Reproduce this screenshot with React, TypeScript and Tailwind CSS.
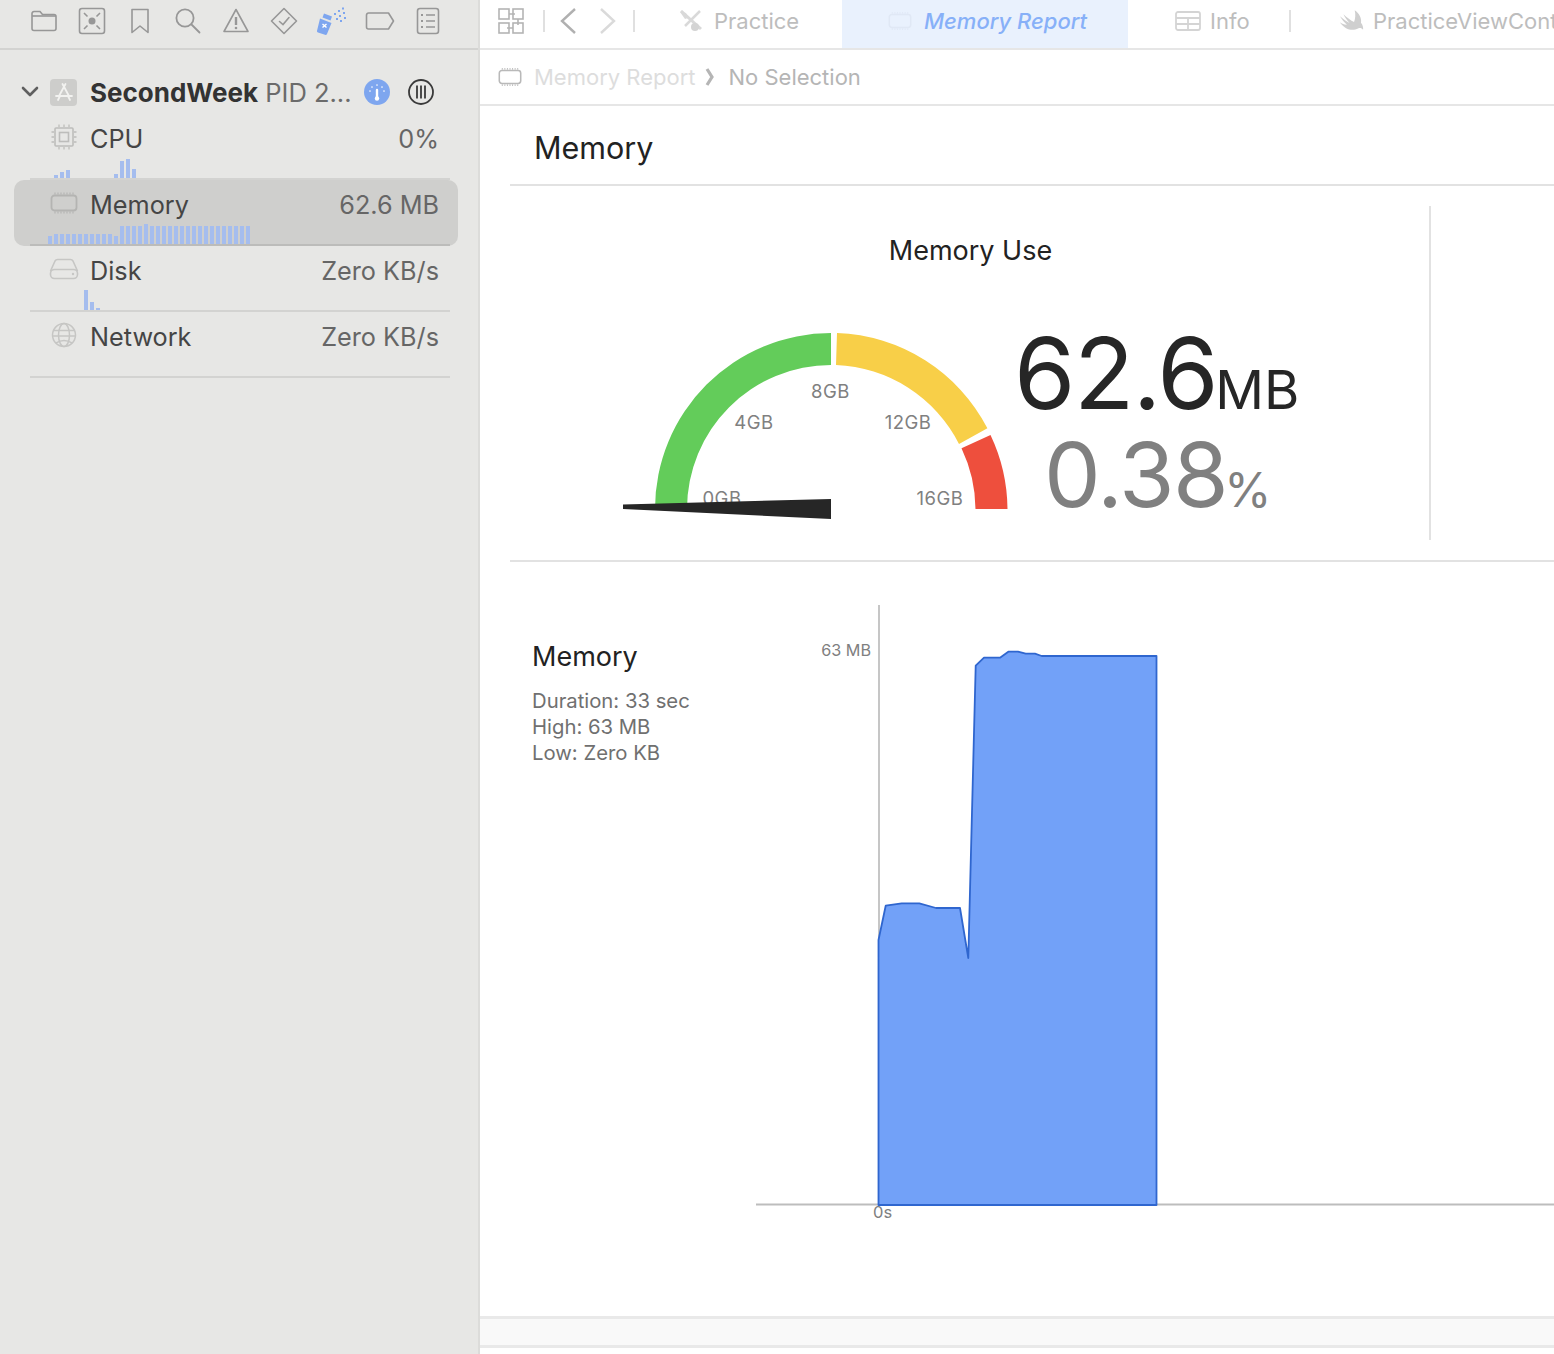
const GREY = '#979797';

function Folder() {
  return (
    <svg width="28" height="26" viewBox="0 0 28 26" fill="none" stroke={GREY} strokeWidth="1.6">
      <path d="M2 20.5V5.5a2 2 0 0 1 2-2h6l2.5 3H24a2 2 0 0 1 2 2v12a2 2 0 0 1-2 2H4a2 2 0 0 1-2-2z" />
      <path d="M2 8h24" />
    </svg>
  );
}

function Issues() {
  return (
    <svg width="28" height="28" viewBox="0 0 28 28" fill="none" stroke={GREY} strokeWidth="1.6">
      <rect x="1.5" y="1.5" width="25" height="25" rx="2.5" />
      <circle cx="14" cy="14" r="3.5" fill={GREY} stroke="none" />
      <path d="M6 6l3.5 3.5M22 6l-3.5 3.5M6 22l3.5-3.5M22 22l-3.5-3.5" />
    </svg>
  );
}

function Bookmark() {
  return (
    <svg width="20" height="28" viewBox="0 0 20 28" fill="none" stroke={GREY} strokeWidth="1.6">
      <path d="M2 2.5h16v23l-8-6.5-8 6.5z" strokeLinejoin="round" />
    </svg>
  );
}

function Search() {
  return (
    <svg width="28" height="28" viewBox="0 0 28 28" fill="none" stroke={GREY} strokeWidth="1.8">
      <circle cx="11" cy="11" r="8.6" />
      <path d="M17.5 17.5l8 8" strokeLinecap="round" />
    </svg>
  );
}

function Warning() {
  return (
    <svg width="28" height="28" viewBox="0 0 28 28" fill="none" stroke={GREY} strokeWidth="1.6">
      <path d="M14 2.5L26 24.5H2z" strokeLinejoin="round" />
      <path d="M14 10v8" strokeWidth="2.4" />
      <circle cx="14" cy="21" r="1.3" fill={GREY} stroke="none" />
    </svg>
  );
}

function TestDiamond() {
  return (
    <svg width="28" height="28" viewBox="0 0 28 28" fill="none" stroke={GREY} strokeWidth="1.6">
      <path d="M14 1.5L26.5 14 14 26.5 1.5 14z" strokeLinejoin="round" />
      <path d="M9.5 14.5l3.5 3 6-7" strokeLinecap="round" />
    </svg>
  );
}

function Spray() {
  return (
    <svg width="32" height="28" viewBox="0 0 32 28" fill="none">
      <path d="M4 11.5l11.5 4.5-4.5 11a1.6 1.6 0 0 1-2 .8L2 25.5a1.6 1.6 0 0 1-.9-2z" fill="#7ea6ef" />
      <path d="M8 6.5l8 3-1.5 4-8-3z" fill="#7ea6ef" />
      <path d="M6.5 18l4 3.5M10.500 18l-4 3.5" stroke="#fff" strokeWidth="1.4" transform="translate(0 -1)" />
      <g fill="#7ea6ef">
        <rect x="18" y="6" width="2" height="2" />
        <rect x="22" y="3" width="2" height="2" />
        <rect x="26" y="0.5" width="2" height="2" />
        <rect x="23" y="8" width="2" height="2" />
        <rect x="27" y="5" width="2" height="2" />
        <rect x="24" y="13" width="2" height="2" />
        <rect x="28" y="10" width="2" height="2" />
        <rect x="20" y="11" width="2" height="2" />
      </g>
    </svg>
  );
}

function Tag() {
  return (
    <svg width="30" height="20" viewBox="0 0 30 20" fill="none" stroke={GREY} strokeWidth="1.6">
      <path d="M3.5 2h20l5 8-5 8h-20A2 2 0 0 1 1.5 16V4a2 2 0 0 1 2-2z" strokeLinejoin="round" />
    </svg>
  );
}

function ListDoc() {
  return (
    <svg width="24" height="28" viewBox="0 0 24 28" fill="none" stroke={GREY} strokeWidth="1.6">
      <rect x="1.5" y="1.5" width="21" height="25" rx="2.5" />
      <path d="M10 8h9M10 14h9M10 20h9" />
      <path d="M5 8h2M5 14h2M5 20h2" strokeWidth="2" />
    </svg>
  );
}

function Chip({ color = '#b4b4b2', width = 28 }: { color?: string; width?: number }) {
  return (
    <svg width={width} height="22" viewBox="0 0 28 22" fill="none" stroke={color} strokeWidth="1.8">
      <rect x="1.5" y="3.5" width="25" height="15" rx="3" />
      <path d="M5 0.5v2M8 0.5v2M11 0.5v2M14 0.5v2M17 0.5v2M20 0.5v2M23 0.5v2M5 19.5v2M8 19.5v2M11 19.5v2M14 19.5v2M17 19.5v2M20 19.5v2M23 19.5v2" strokeWidth="1.1" />
    </svg>
  );
}

function Cpu() {
  return (
    <svg width="26" height="26" viewBox="0 0 26 26" fill="none" stroke="#bdbdbb" strokeWidth="1.6">
      <rect x="4" y="4" width="18" height="18" rx="1" />
      <rect x="8.5" y="8.5" width="9" height="9" />
      <path d="M8 0.5v2.5M13 0.5v2.5M18 0.5v2.5M8 23v2.5M13 23v2.5M18 23v2.5M0.5 8H3M0.5 13H3M0.5 18H3M23 8h2.5M23 13h2.5M23 18h2.5" strokeWidth="1.3" />
    </svg>
  );
}

function Disk() {
  return (
    <svg width="30" height="22" viewBox="0 0 30 22" fill="none" stroke="#c6c6c4" strokeWidth="1.6">
      <path d="M1.5 13L6 3a3 3 0 0 1 2.6-1.5h12.8A3 3 0 0 1 24 3l4.500 10" />
      <rect x="1.500" y="11.500" width="27" height="9" rx="4" />
      <circle cx="24" cy="16" r="1.200" fill="#c6c6c4" stroke="none" />
    </svg>
  );
}

function Globe() {
  return (
    <svg width="26" height="26" viewBox="0 0 26 26" fill="none" stroke="#c6c6c4" strokeWidth="1.5">
      <circle cx="13" cy="13" r="11.500" />
      <ellipse cx="13" cy="13" rx="5.500" ry="11.500" />
      <path d="M2.500 8.500h21M1.500 14h23M5 21c5-3 11-3 16 0" />
    </svg>
  );
}

function SchemeGrid() {
  return (
    <svg width="26" height="26" viewBox="0 0 26 26" fill="none" stroke="#b4b4b4" strokeWidth="1.6">
      <rect x="1" y="1" width="10" height="10" />
      <rect x="15" y="1" width="10" height="10" />
      <rect x="1" y="15" width="10" height="10" />
      <rect x="15" y="15" width="10" height="10" />
      <path d="M11 6h6M20 11v6M15 20H9" />
    </svg>
  );
}

function Chevron({ dir, color }: { dir: 'left' | 'right'; color: string }) {
  return (
    <svg width="18" height="28" viewBox="0 0 18 28" fill="none" stroke={color} strokeWidth="2.4">
      <path d={dir === 'left' ? 'M16 2L3 14l13 12' : 'M2 2l13 12L2 26'} />
    </svg>
  );
}

function Hammer() {
  return (
    <svg width="24" height="22" viewBox="0 0 24 22" fill="none">
      <path d="M2 1l20 18" stroke="#d9d9d9" strokeWidth="3" />
      <path d="M21 1L6 16" stroke="#d9d9d9" strokeWidth="2.500" />
      <path d="M1 2l6 1 2 5-3 1z" fill="#d9d9d9" />
      <circle cx="16" cy="17" r="4" fill="#d4d4d4" />
    </svg>
  );
}

function TableIcon() {
  return (
    <svg width="26" height="20" viewBox="0 0 26 20" fill="none" stroke="#d4d4d4" strokeWidth="1.8">
      <rect x="1" y="1" width="24" height="18" rx="2" />
      <path d="M1 7h24M1 13h24M13 7v12" />
    </svg>
  );
}

function SwiftIcon() {
  return (
    <svg width="26" height="24" viewBox="0 0 24 22">
      <path d="M14.500 1c4.500 3.200 6.500 7.500 5.800 11.500 1.700 2.200 2.300 4.700 1.900 6.500-1.200-1.600-3-1.800-4.600-1.100-3 1.500-7.300 1.700-11.100-.2C3.900 16.200 1.900 14 .8 12.200c1.900 1.400 4.200 2.400 6.500 2.300C4.800 12.300 2.500 9.500.9 6.700c3 2.700 6.300 4.900 8.900 6.100C7.500 10.400 5.300 7.400 4.100 4.700c3.200 3.100 6.900 5.800 9.800 7.200 1.300-3.300 1.500-7.300.6-10.900z" fill="#cfcfcf" />
    </svg>
  );
}

function Gauge() {
  return (
    <svg width="395" height="200" viewBox="620 325 395 200" className="shrink-0">
      <path d="M655 509A176 176 0 0 1 831 333V365A144 144 0 0 0 687 509Z" fill="#63cc5a" />
      <path d="M837 333.100A176 176 0 0 1 987.400 428.300L959 443.900A144 144 0 0 0 836 365.100Z" fill="#f8cf48" />
      <path d="M990.500 434.900A176 176 0 0 1 1007.500 509H975.500A144 144 0 0 0 961.500 448.200Z" fill="#ee4f3d" />
      <g fill="#808080" fontSize="18.500" letterSpacing="0.5" textAnchor="middle" className="[font-family:Inter,sans-serif]">
        <text x="830.500" y="397.500">8GB</text>
        <text x="754" y="429">4GB</text>
        <text x="908" y="429">12GB</text>
        <text x="940" y="505">16GB</text>
        <text x="722" y="505">0GB</text>
      </g>
      <path d="M623 504.500L831 499V519L623 509Z" fill="#262626" />
    </svg>
  );
}

function MemoryChart() {
  return (
    <svg width="798" height="640" viewBox="756 600 798 640" className="shrink-0">
      <path d="M879 605V940" stroke="#c0c0c0" strokeWidth="1.800" fill="none" />
      <path d="M756 1204.500H1554" stroke="#bdbdbd" strokeWidth="1.800" fill="none" />
      <path
        d="M878.500 1205V940L885.700 905.700L901.700 903.300H919.300L936 908H960L968.300 958L975.700 665.700L984 657.700H1000L1008.300 651.700H1018L1025.700 653.700H1035L1041.700 656H1156.500V1205Z"
        fill="#72a1f8"
        stroke="#2f66cf"
        strokeWidth="1.800"
        strokeLinejoin="round"
      />
      <text x="871" y="655.500" textAnchor="end" fill="#808080" fontSize="16.200" className="[font-family:Inter,sans-serif]">63 MB</text>
      <text x="873" y="1218" fill="#808080" fontSize="16.500" className="[font-family:Inter,sans-serif]">0s</text>
    </svg>
  );
}

const rows = [
  { label: 'CPU', value: '0%', icon: <Cpu />, bars: [0, 3, 6, 8, 0, 0, 0, 0, 0, 0, 0, 4, 17, 19, 9] },
  {
    label: 'Memory',
    value: '62.6 MB',
    icon: <Chip />,
    selected: true,
    bars: [8, 10, 10, 10, 10, 10, 10, 10, 10, 10, 10, 8, 18, 18, 18, 18, 20, 18, 18, 18, 18, 18, 18, 18, 18, 18, 18, 18, 18, 18, 18, 18, 18, 18],
  },
  { label: 'Disk', value: 'Zero KB/s', icon: <Disk />, bars: [0, 0, 0, 0, 0, 0, 20, 8, 2] },
  { label: 'Network', value: 'Zero KB/s', icon: <Globe />, bars: [] as number[] },
];

export default function App() {
  return (
    <div className="flex h-[1354px] w-[1554px] overflow-hidden bg-white [font-family:Inter,sans-serif]">
      {/* Navigator */}
      <aside className="h-full w-[480px] shrink-0 border-r-2 border-[#dcdcda] bg-[#e7e7e5]">
        <div className="flex h-[50px] items-start border-b-2 border-[#d3d3d1] pl-[20px] pt-[7px]">
          {[<Folder />, <Issues />, <Bookmark />, <Search />, <Warning />, <TestDiamond />, <Spray />, <Tag />, <ListDoc />].map((icon, i) => (
            <div key={i} className="flex h-[28px] w-[48px] items-center justify-center">
              {icon}
            </div>
          ))}
        </div>

        <div className="flex h-[64px] items-center pl-[20px] pt-[20px]">
          <svg width="20" height="14" viewBox="0 0 20 14" fill="none" stroke="#5f5f5f" strokeWidth="2.600" className="shrink-0">
            <path d="M3 3l7 7 7-7" strokeLinecap="round" strokeLinejoin="round" />
          </svg>
          <div className="ml-[10px] flex h-[27px] w-[27px] shrink-0 items-center justify-center rounded-[4px] bg-[#cdcdcb]">
            <svg width="20" height="20" viewBox="0 0 20 20" fill="none" stroke="#f2f2f0" strokeWidth="1.800">
              <path d="M11.500 2L5 14M8.500 2L15 14M2 14h16M4 18l2-4M16 18l-2-4" strokeLinecap="round" />
            </svg>
          </div>
          <div className="ml-[13px] w-[274px] shrink-0 whitespace-nowrap pt-[2px] text-[25.5px] text-[#6b6b6b]">
            <span className="text-[26px] font-bold text-[#333333]">SecondWeek</span> PID 2...
          </div>
          <svg width="26" height="26" viewBox="0 0 26 26" className="shrink-0">
            <circle cx="13" cy="13" r="13" fill="#7ea6ef" />
            <path d="M13 11v8" stroke="#fff" strokeWidth="2.400" strokeLinecap="round" />
            <circle cx="13" cy="19.500" r="2.200" fill="#fff" />
            <path d="M6 12v.1M8 8v.1M13 6v.1M18 8v.1M20 12v.1" stroke="#fff" strokeWidth="1.600" strokeLinecap="round" />
          </svg>
          <svg width="26" height="26" viewBox="0 0 26 26" fill="none" stroke="#3a3a3a" strokeWidth="1.800" className="ml-[18px] shrink-0">
            <circle cx="13" cy="13" r="12" />
            <path d="M9 6.500v13M13 6.500v13M17 6.500v13" />
          </svg>
        </div>

        {rows.map((row) => (
          <div key={row.label} className={`ml-[14px] mr-[20px] h-[66px] rounded-[10px] ${row.selected ? 'bg-[#cfcfcd]' : ''}`}>
            <div className={`ml-[16px] mr-[8px] flex h-full flex-col border-b-2 ${row.selected ? 'border-[#bcbcba]' : 'border-[#d3d3d1]'}`}>
              <div className="flex h-[44px] shrink-0 items-center pr-[11px] pt-[8px]">
                <div className="flex w-[60px] shrink-0 justify-center pb-[6px] pl-[7px]">{row.icon}</div>
                <span className="text-[25.25px] text-[#454545]">{row.label}</span>
                <span className="ml-auto text-[25.25px] text-[#666666]">{row.value}</span>
              </div>
              <div className="ml-[18px] flex h-[20px] shrink-0 items-end gap-[2px]">
                {row.bars.map((h, i) => (
                  <div key={i} className="w-[4px] shrink-0 bg-[#a5bdee]" style={{ height: h }} />
                ))}
              </div>
            </div>
          </div>
        ))}
      </aside>

      {/* Editor */}
      <main className="h-full min-w-0 flex-1 overflow-hidden">
        <div className="flex h-[50px] items-center whitespace-nowrap border-b-2 border-[#e6e6e6] pb-[6px] text-[22px] text-[#bdbdbd]">
          <div className="ml-[18px] flex w-[26px] shrink-0 justify-center"><SchemeGrid /></div>
          <div className="ml-[19px] h-[22px] w-[2px] shrink-0 bg-[#e0e0e0]" />
          <div className="ml-[14px] shrink-0"><Chevron dir="left" color="#b0b0b0" /></div>
          <div className="ml-[22px] shrink-0"><Chevron dir="right" color="#dadada" /></div>
          <div className="ml-[16px] h-[22px] w-[2px] shrink-0 bg-[#e0e0e0]" />
          <div className="ml-[44px] shrink-0"><Hammer /></div>
          <span className="ml-[11px] w-[128px] shrink-0">Practice</span>
          <div className="flex h-[48px] w-[286px] shrink-0 items-center self-start bg-[#e9f1fd] pb-[6px]">
            <div className="ml-[46px] w-[36px] shrink-0"><Chip color="#e0e8f5" width={24} /></div>
            <span className="text-[22px] font-medium italic text-[#87b0f8]">Memory Report</span>
          </div>
          <div className="ml-[47px] shrink-0"><TableIcon /></div>
          <span className="ml-[9px] w-[79px] shrink-0">Info</span>
          <div className="h-[22px] w-[2px] shrink-0 bg-[#e0e0e0]" />
          <div className="ml-[48px] shrink-0"><SwiftIcon /></div>
          <span className="ml-[8px] shrink-0">PracticeViewController</span>
        </div>

        <div className="flex h-[56px] items-center whitespace-nowrap border-b-2 border-[#e6e6e6] text-[22px]">
          <div className="ml-[18px] w-[36px] shrink-0"><Chip color="#b9b9b9" width={24} /></div>
          <span className="text-[#dddddd]">Memory Report</span>
          <svg width="10" height="20" viewBox="0 0 10 20" fill="none" stroke="#b5b5b5" strokeWidth="3.200" className="ml-[9px] shrink-0">
            <path d="M2 2l5 8-5 8" />
          </svg>
          <span className="ml-[14px] text-[#b5b5b5]">No Selection</span>
        </div>

        <div className="ml-[30px]">
          <div className="flex h-[80px] items-center border-b-2 border-[#e2e2e2] pl-[24px] pt-[6px] text-[30.5px] text-[#222222]">Memory</div>

          <div className="h-[376px] border-b-2 border-[#e2e2e2] pt-[20px]">
            <div className="h-[334px] w-[921px] border-r-2 border-[#e2e2e2]">
              <div className="pl-[2px] pt-[28px] text-center text-[27px] leading-[34px] text-[#222222]">Memory Use</div>
              <div className="flex pt-[57px]">
                <div className="ml-[110px] shrink-0"><Gauge /></div>
                <div className="-mt-[6px] -ml-[1px] shrink-0">
                  <div className="flex h-[107px] items-baseline whitespace-nowrap text-[#262626]">
                    <span className="text-[99px] font-normal leading-[108px] tracking-[-1.5px]">62.6</span>
                    <span className="-ml-[2px] text-[54px] font-normal">MB</span>
                  </div>
                  <div className="ml-[30px] flex h-[98px] items-baseline whitespace-nowrap text-[#808080]">
                    <span className="text-[90px] font-normal leading-[98px] tracking-[-1.5px]">0.38</span>
                    <span className="-ml-[3px] text-[48px] font-normal">%</span>
                  </div>
                </div>
              </div>
            </div>
          </div>

          <div className="flex h-[754px]">
            <div className="w-[246px] shrink-0 pl-[22px] pt-[78px]">
              <div className="text-[27px] leading-[34px] text-[#222222]">Memory</div>
              <div className="mt-[14px] text-[20.3px] leading-[26px] text-[#707070]">
                <div>Duration: 33 sec</div>
                <div>High: 63 MB</div>
                <div>Low: Zero KB</div>
              </div>
            </div>
            <div className="pt-[38px]"><MemoryChart /></div>
          </div>
        </div>

        <div className="h-[32px] border-y-[3px] border-[#e9e9e9] bg-[#f9f9f9]" />
      </main>
    </div>
  );
}
